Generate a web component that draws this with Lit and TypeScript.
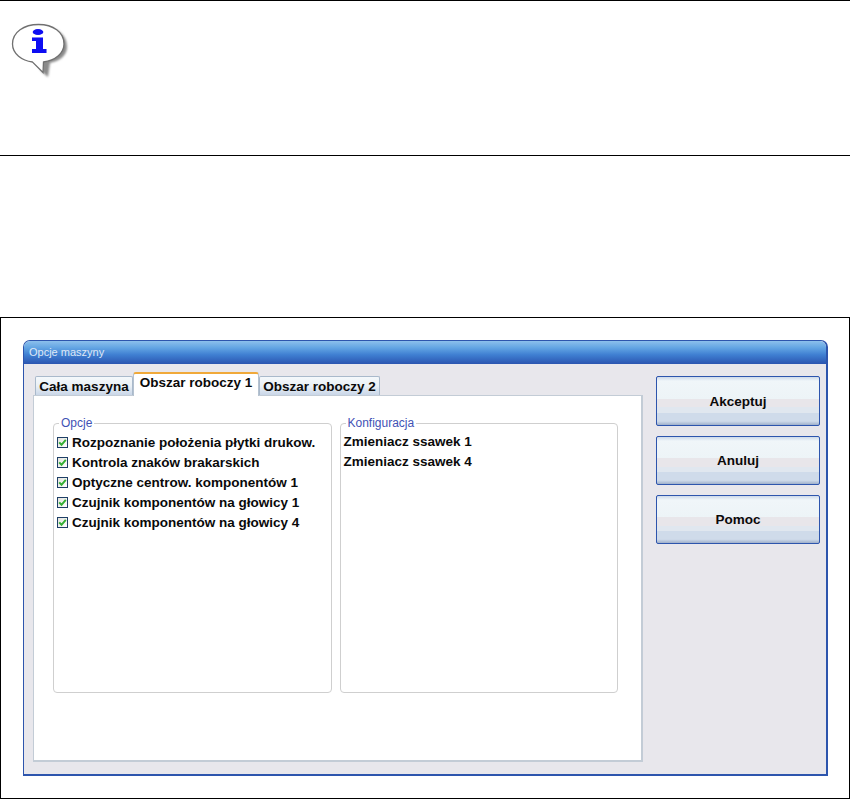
import { LitElement, html, css, svg } from "lit";
import { customElement } from "lit/decorators.js";

const options = [
  "Rozpoznanie położenia płytki drukow.",
  "Kontrola znaków brakarskich",
  "Optyczne centrow. komponentów 1",
  "Czujnik komponentów na głowicy 1",
  "Czujnik komponentów na głowicy 4",
];
const config = ["Zmieniacz ssawek 1", "Zmieniacz ssawek 4"];
const buttons = ["Akceptuj", "Anuluj", "Pomoc"];

const infoIcon = svg`<svg class="info" width="80" height="80" viewBox="0 0 80 80" aria-hidden="true">
  <defs>
    <filter id="b" x="-20%" y="-20%" width="140%" height="140%"><feGaussianBlur stdDeviation="1.2"/></filter>
    <filter id="s" x="-10%" y="-10%" width="120%" height="120%"><feGaussianBlur stdDeviation="0.4"/></filter>
  </defs>
  <path d="M40 26 C54 26 67 33 67 47 C67 56 59 61 50 63 L48 77 L42 72 L36 62 Z" fill="#8a8a8a" filter="url(#b)"/>
  <path d="M38.5 24.5 C24 24.5 12.5 32 12.5 44 C12.5 54 22 60.5 32.5 62 L43 72.5 L43.5 62 C55 60.5 64 53.5 64 44 C64 32 53 24.5 38.5 24.5 Z" fill="#fff" stroke="#707070" stroke-width="1.3" filter="url(#s)"/>
  <ellipse cx="38" cy="32" rx="5.3" ry="3" fill="#0808f2" filter="url(#s)"/>
  <path d="M32 37.5 H43 V49 H46.5 V53 H32 V49 H36 V41 H32 Z" fill="#0808f2" filter="url(#s)"/>
</svg>`;

const check = svg`<svg width="9" height="9" viewBox="0 0 9 9" aria-hidden="true"><path d="M1.2 4.4 L3.5 6.8 L7.8 1.8" fill="none" stroke="#35b035" stroke-width="2"/></svg>`;

@customElement("app-root")
export class AppRoot extends LitElement {
  static styles = css`
    :host { display: block; width: 850px; height: 799px; background: #fff; font-family: "Liberation Sans", Arial, sans-serif; overflow: hidden; }
    .note { height: 156px; box-sizing: border-box; border-top: 1px solid #000; border-bottom: 1px solid #000; }
    .info { display: block; margin-top: -1px; }
    .shot { margin-top: 161px; height: 482px; box-sizing: border-box; border: 1px solid #000; padding: 22px 21px 22px 22px; }
    .win { width: 805px; height: 436px; box-sizing: border-box; border: 1px solid #2d55ad; border-width: 1px 2px 2px 1px; border-radius: 7px 7px 0 0; background: #e8e7ec; display: flex; flex-direction: column; }
    .title { height: 23px; flex: none; border-radius: 6px 6px 0 0; background: linear-gradient(#8cc0ec 0, #62a4e3 30%, #3f7fd2 60%, #2b55b0 100%); color: #dfe8f6; font-size: 11px; line-height: 23px; padding-left: 5px; }
    .body { flex: 1; min-height: 0; display: flex; padding: 9px 7px 12px 9px; gap: 13px; }
    .left { width: 610px; display: flex; flex-direction: column; }
    .tabs { display: flex; height: 22px; padding-left: 2px; align-items: flex-end; flex: none; position: relative; z-index: 1; }
    .tab { box-sizing: border-box; height: 19px; border: 1px solid #a9b9cb; border-bottom: none; border-radius: 2px 2px 0 0; background: linear-gradient(#f4f8fb 0, #eaf0f5 50%, #c9d6e8 100%); font-weight: bold; font-size: 13.5px; line-height: 19px; text-align: center; color: #0a0a0a; white-space: nowrap; }
    .tab.active { height: 24px; margin-bottom: -1px; background: #fff; border-color: #b5c2d0; border-top: 2px solid #f0a93a; border-radius: 3px 3px 0 0; line-height: 17px; padding-bottom: 4px; }
    .panel { flex: 1; min-height: 0; box-sizing: border-box; background: #fff; border: 1px solid #c3ccd6; border-width: 1px 2px 2px 1px; padding: 27px 23px 0 19px; display: flex; gap: 8px; align-items: flex-start; }
    .group { position: relative; box-sizing: border-box; width: 279px; height: 270px; border: 1px solid #cfcfcf; border-radius: 4px; padding: 8px 3px; }
    .legend { position: absolute; top: -8px; left: 5px; background: #fff; padding: 0 2px; font-size: 12px; line-height: 14px; color: #3f52b5; }
    .row { display: flex; align-items: center; height: 20px; gap: 4px; font-size: 13.5px; font-weight: bold; color: #0a0a0a; white-space: nowrap; }
    .box { width: 11px; height: 11px; box-sizing: border-box; border: 1px solid #1e3f66; background: linear-gradient(135deg, #e4e4de, #fff); display: flex; align-items: center; justify-content: center; flex: none; }
    .group.cfg { padding: 7px 3px; }
    .side { display: flex; flex-direction: column; padding-top: 3px; }
    .btn { box-sizing: border-box; width: 164px; height: 49px; margin-bottom: 10px; border: 1px solid #2d55ad; border-radius: 2px; display: flex; align-items: center; justify-content: center; font-weight: bold; font-size: 13.5px; color: #0a0a0a; background: linear-gradient(#cdd9ea 0, #f0f6f9 4px, #edf4f7 45%, #e8e6ea 45%, #e8e6ea 63%, #e0e7ef 63%, #e0e7ef 74%, #cfdbea 74%, #cfdbea 92%, #9fb0cb 100%); }
    .btn.first { height: 50px; }
  `;

  render() {
    return html`
      <div class="note">${infoIcon}</div>
      <div class="shot">
        <div class="win">
          <div class="title">Opcje maszyny</div>
          <div class="body">
            <div class="left">
              <div class="tabs">
                <div class="tab" style="width:98px">Cała maszyna</div>
                <div class="tab active" style="width:126px">Obszar roboczy 1</div>
                <div class="tab" style="width:121px">Obszar roboczy 2</div>
              </div>
              <div class="panel">
                <div class="group">
                  <div class="legend">Opcje</div>
                  ${options.map((o) => html`<div class="row"><span class="box">${check}</span>${o}</div>`)}
                </div>
                <div class="group cfg">
                  <div class="legend">Konfiguracja</div>
                  ${config.map((o) => html`<div class="row">${o}</div>`)}
                </div>
              </div>
            </div>
            <div class="side">
              ${buttons.map((b, i) => html`<div class="btn ${i === 0 ? "first" : ""}">${b}</div>`)}
            </div>
          </div>
        </div>
      </div>
    `;
  }
}
